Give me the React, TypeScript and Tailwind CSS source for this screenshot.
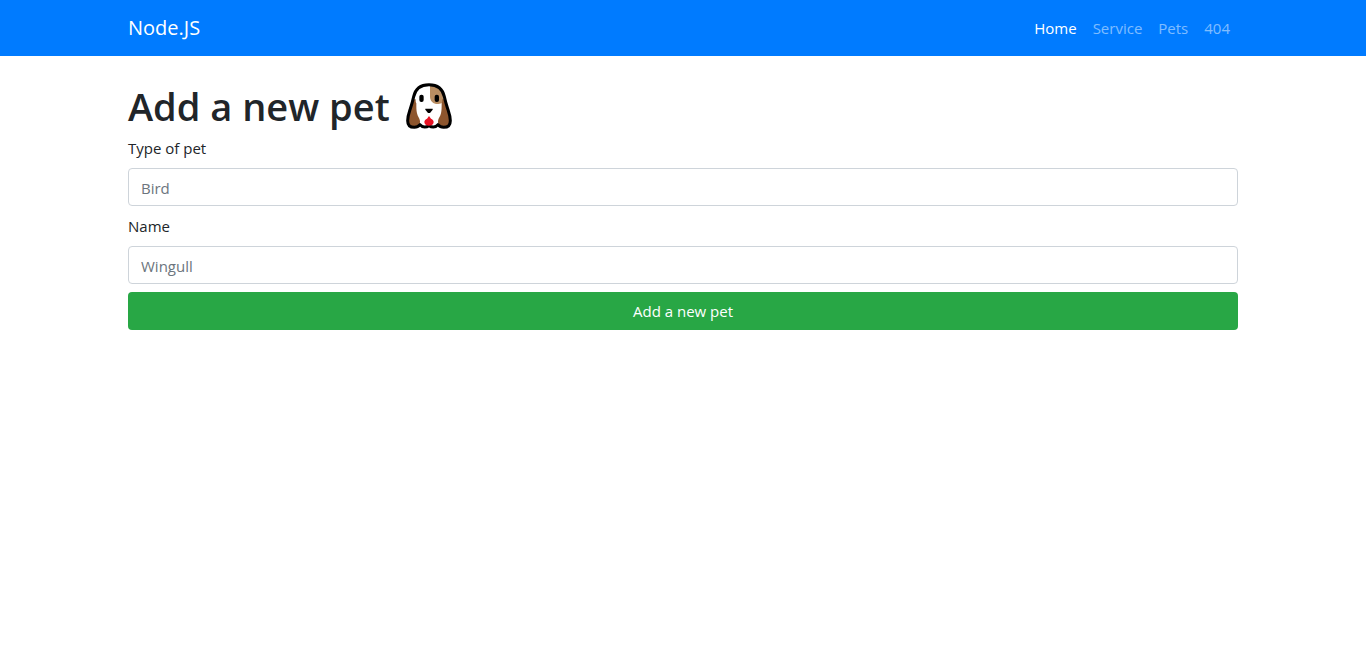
import React from "react";

const links = [
  { label: "Home", active: true },
  { label: "Service", active: false },
  { label: "Pets", active: false },
  { label: "404", active: false },
];

const headOutline =
  "M90 26C66 26 49 38 44 62C41 76 38 86 34 98C30 110 26 120 26 134C26 148 35 154 46 154C53 154 59 151 63 146C66 150 72 153 77 153C83 153 87 151 90 149C93 151 97 153 103 153C108 153 114 150 117 146C121 151 127 154 134 154C145 154 154 148 154 134C154 120 150 110 146 98C142 86 139 76 136 62C131 38 114 26 90 26Z";

function DogIcon() {
  return (
    <svg viewBox="21 21 138 138" className="size-[46px] shrink-0" role="img" aria-label="Dog">
      <path d={headOutline} fill="#fff" />
      <path d="M93 28C114 29 128 42 134 62L136 80L126 82C122 84 119 84 116 84C103 84 93 75 93 62Z" fill="#b88d62" />
      <path
        d="M43 70C40 92 27 114 27 134C27 148 37 153 46 153C57 153 64 146 63 135C62 127 56 122 54 112C52 103 52 94 52 82C50 80 50 76 50 70Z"
        fill="#8d552d"
      />
      <path
        d="M137 70C140 92 153 114 153 134C153 148 143 153 134 153C123 153 116 146 117 135C118 127 124 122 126 112C128 103 128 94 128 82C130 80 130 76 130 70Z"
        fill="#8d552d"
      />
      <rect x="61" y="56" width="13" height="22" rx="6" fill="#000" />
      <rect x="107" y="56" width="13" height="22" rx="6" fill="#000" />
      <path d="M79 98H101V101L93 111H87L79 101Z" fill="#000" />
      <path d={headOutline} fill="none" stroke="#000" strokeWidth="9" strokeLinejoin="round" />
      <path
        d="M90 120L96 128C100 130 104 133 104 138C104 145 98 149 90 149C82 149 76 145 76 138C76 133 80 130 84 128Z"
        fill="#e81224"
      />
    </svg>
  );
}

function Field({ id, label, placeholder }: { id: string; label: string; placeholder: string }) {
  return (
    <div className="flex flex-col gap-2">
      <label htmlFor={id} className="leading-6">{label}</label>
      <input
        id={id}
        type="text"
        placeholder={placeholder}
        className="h-[38px] w-full rounded border border-[#ced4da] bg-white px-3 pt-0.5 text-[#495057] placeholder:text-[#6c757d]"
      />
    </div>
  );
}

export default function App() {
  return (
    <div className="font-['Segoe_UI','Open_Sans',sans-serif] text-[15px] text-[#212529]">
      <header className="bg-[#007bff]">
        <nav className="mx-auto flex h-14 max-w-[1140px] items-center justify-between px-[15px]">
          <a href="#home" className="text-xl leading-8 text-white">Node.JS</a>
          <ul className="flex">
            {links.map((link) => (
              <li key={link.label}>
                <a
                  href={"#" + link.label.toLowerCase()}
                  className={link.active ? "block px-2 leading-6 text-white" : "block px-2 leading-6 text-white/50"}
                >
                  {link.label}
                </a>
              </li>
            ))}
          </ul>
        </nav>
      </header>
      <main className="mx-auto max-w-[1140px] px-[15px] pt-6">
        <h1 className="mb-1 flex h-13 items-center gap-4 text-[38px] leading-[50px] font-semibold">
          Add a new pet
          <DogIcon />
        </h1>
        <form className="flex flex-col gap-2" onSubmit={(event) => event.preventDefault()}>
          <Field id="pet-type" label="Type of pet" placeholder="Bird" />
          <Field id="pet-name" label="Name" placeholder="Wingull" />
          <button type="submit" className="h-[38px] w-full rounded bg-[#28a745] text-white">
            Add a new pet
          </button>
        </form>
      </main>
    </div>
  );
}
